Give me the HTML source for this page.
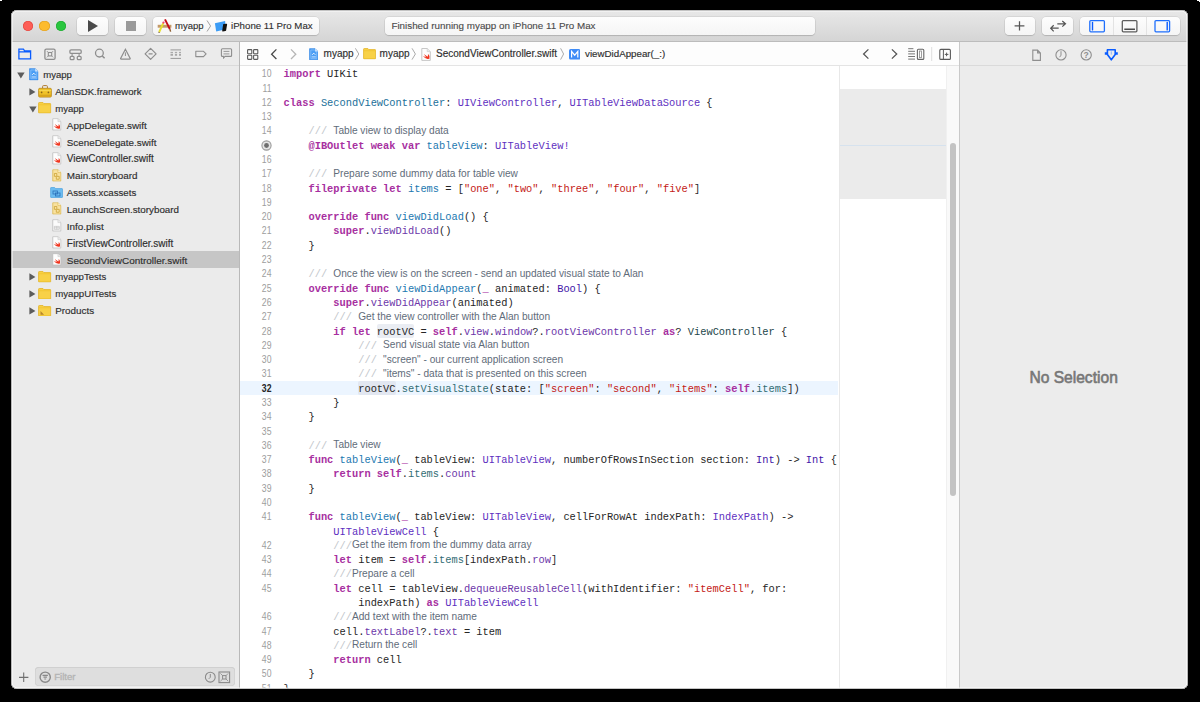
<!DOCTYPE html>
<html><head><meta charset="utf-8">
<style>
*{margin:0;padding:0;box-sizing:border-box}
html,body{width:1200px;height:702px;background:#000;overflow:hidden;font-family:"Liberation Sans",sans-serif}
svg{display:block}
#win{position:absolute;left:11px;top:10px;width:1177px;height:679px;border-radius:6px;background:#ececec;overflow:hidden}
#edge{position:absolute;left:11px;top:10px;width:1177px;height:679px;border-radius:6px;box-shadow:inset 0 0 0 0.6px rgba(110,110,110,0.8),inset 0 0 0 1.6px rgba(255,255,255,0.85);pointer-events:none}
.abs{position:absolute}
#title{position:absolute;left:0;top:0;width:1177px;height:32px;background:linear-gradient(#e8e8e8,#d5d5d5);border-bottom:1px solid #bcbcbc}
.tl{position:absolute;top:10.9px;width:10.4px;height:10.4px;border-radius:50%}
.btn{position:absolute;top:7px;height:18px;background:linear-gradient(#fdfdfd,#f5f5f5);border-radius:4px;box-shadow:0 0 0 0.5px rgba(0,0,0,0.12),0 1px 1px rgba(0,0,0,0.12)}
.txt{position:absolute;white-space:nowrap;color:#2e2e2e;-webkit-text-stroke:0.12px currentColor}
#nav{position:absolute;left:1px;top:32px;width:227px;height:647px;background:#ebebeb}
#navbar{position:absolute;left:0;top:0;width:227px;height:24px;border-bottom:1px solid #dadada}
#divL{position:absolute;left:228px;top:32px;width:1px;height:647px;background:#b9b9b9}
#editor{position:absolute;left:229px;top:32px;width:719px;height:647px;background:#fff;overflow:hidden}
#jump{position:absolute;left:0;top:0;width:719px;height:24px;background:#fdfdfd;border-bottom:1px solid #e4e4e4}
#divR{position:absolute;left:948px;top:32px;width:1px;height:647px;background:#c9c9c9}
#insp{position:absolute;left:949px;top:32px;width:228px;height:647px;background:#ececec}
#inspbar{position:absolute;left:0;top:0;width:228px;height:24px;border-bottom:1px solid #dadada}
.row{position:absolute;left:0;width:227px;height:16.86px;font-size:10px;color:#262626;white-space:nowrap}
.row .t{position:absolute;top:3.4px;line-height:12px;-webkit-text-stroke:0.15px #2e2e2e;color:#2e2e2e}
.row .tri{position:absolute}
.row .ic{position:absolute}
.sel{background:#c6c6c6}
#code{position:absolute;left:0;top:25.3px;width:719px;font-family:"Liberation Mono",monospace;font-size:10.36px;line-height:14.29px;color:#262626;white-space:pre}
.ln{position:absolute;left:0;width:31.5px;height:14.29px;text-align:right;font-family:"Liberation Sans",sans-serif;font-size:10.3px;transform:translateY(-0.2px) scaleX(0.84);transform-origin:100% 50%;color:#9d9d9d}
.cl{position:absolute;left:43.6px;height:14.29px}
.hl{position:absolute;left:0;width:598px;height:14.29px;background:#ecf5ff}
.ln.cur{color:#262626;font-weight:bold}
.rv{background:#eaedf3;border-radius:2px;padding-top:1.8px}
.rv2{background:#e2e7f1;border-radius:2px;padding-top:1.8px}
.k{color:#a72fa0;font-weight:bold}
.s{color:#c41a16}
.ty{color:#5e2fc0}
.ty2{color:#4314a8}
.dt{color:#22709a}
.dc{color:#1b78b0}
.pf{color:#326d74}
.of{color:#6c36a9}
.pc{color:#1c464a}
.cm{color:#c2c6cb}
.ct{font-family:"Liberation Sans",sans-serif;font-size:10.15px;color:#5f6c7a;position:relative;top:-0.6px}
.jt{position:absolute;top:6.2px;font-size:10px;line-height:12px;color:#2e2e2e;white-space:nowrap;-webkit-text-stroke:0.15px #2e2e2e}
</style></head><body>
<svg width="0" height="0" style="position:absolute">
<defs>
<symbol id="swift" viewBox="0 0 10 13"><path d="M0.8 0.5H6.2L9.3 3.6V12.4H0.8Z" fill="#fdfdfd" stroke="#b9b9b9" stroke-width="0.8"/><path d="M6.2 0.5V3.6H9.3" fill="#eaeaea" stroke="#c8c8c8" stroke-width="0.6"/><path d="M1.8 7.8L5.2 9.6L2.9 6L6.6 8.7Q7.3 7.2 6.9 5.8Q8.9 7.6 8.4 10.2Q8.7 11 8 10.8Q4.8 11.9 1.8 7.8Z" fill="#f0351f"/></symbol>
<symbol id="folder" viewBox="0 0 14 12"><path d="M0.6 1.2Q0.6 0.5 1.3 0.5H5.2L6.2 1.6H12.8Q13.4 1.6 13.4 2.3V11Q13.4 11.5 12.8 11.5H1.2Q0.6 11.5 0.6 11Z" fill="#f8d147" stroke="#e2b222" stroke-width="0.8"/><path d="M0.8 2.8H13.2" stroke="#f0c22e" stroke-width="0.8"/></symbol>
<symbol id="proj" viewBox="0 0 10 13"><path d="M0.6 0.6H6.4L9.4 3.6V12.4H0.6Z" fill="#4b9ef5" stroke="#2f83e4" stroke-width="0.7"/><path d="M6.4 0.6V3.6H9.4Z" fill="#dcecfd"/><path d="M1.9 2H6L8.1 4.1V11H1.9Z" fill="none" stroke="#9fcdfb" stroke-width="0.6"/><path d="M3.4 7L5 5.4L6.6 7" fill="none" stroke="#fff" stroke-width="1"/><path d="M2.8 9.3H7.2" stroke="#e2f0ff" stroke-width="0.9"/></symbol>
<symbol id="sb" viewBox="0 0 10 13"><path d="M0.8 0.5H6.2L9.3 3.6V12.4H0.8Z" fill="#f9e2a0" stroke="#d9b44a" stroke-width="0.8"/><path d="M6.2 0.5V3.6H9.3" fill="#fff3cc" stroke="#d9b44a" stroke-width="0.6"/><path d="M2.5 4.5H5V7.5H7.5V10.5H4.5V7.5H2.5Z" fill="none" stroke="#c9a030" stroke-width="0.8"/></symbol>
<symbol id="plist" viewBox="0 0 10 13"><path d="M0.8 0.5H6.2L9.3 3.6V12.4H0.8Z" fill="#fbfbfb" stroke="#b9b9b9" stroke-width="0.8"/><path d="M6.2 0.5V3.6H9.3" fill="#eee" stroke="#c8c8c8" stroke-width="0.6"/><path d="M2.4 7.5H7.6V10.6H2.4ZM2.4 9H7.6M5 7.5V10.6" fill="none" stroke="#b5b5b5" stroke-width="0.6"/></symbol>
</defs>
</svg>
<div id="win">
  <div id="title">
    <div class="tl" style="left:11.6px;background:#fd5e56;box-shadow:inset 0 0 0 0.6px #e0443e"></div>
    <div class="tl" style="left:28.3px;background:#fdbb2e;box-shadow:inset 0 0 0 0.6px #de9f22"></div>
    <div class="tl" style="left:45px;background:#2ac63f;box-shadow:inset 0 0 0 0.6px #1ea832"></div>
    <div class="btn" style="left:66px;width:31px"><svg class="abs" style="left:11px;top:3px" width="10" height="12"><path d="M0 0L10 6L0 12Z" fill="#4a4a4a"/></svg></div>
    <div class="btn" style="left:104px;width:31px"><div class="abs" style="left:11px;top:4px;width:10px;height:10px;background:#9a9a9a"></div></div>
    <div class="btn" style="left:142px;width:166px">
      <svg class="abs" style="left:1px;top:-1px" width="22" height="20"><rect x="3.7" y="8.8" width="13.7" height="2.9" fill="#c49a68"/><path d="M11 3.4L15.8 13" stroke="#c40f1a" stroke-width="1.9"/><path d="M15.8 13L16.6 15.6" stroke="#8a5a2a" stroke-width="1.4"/><path d="M9.4 6.8L5.2 16" stroke="#e6df2e" stroke-width="1.9"/><circle cx="9.5" cy="6.6" r="1.1" fill="#f04378"/><path d="M5.2 16L4.8 16.8" stroke="#6a4a2a" stroke-width="1.4"/></svg>
      <div class="txt" style="left:22px;top:2.7px;font-size:9.5px;line-height:12px">myapp</div>
      <svg class="abs" style="left:53px;top:3px" width="6" height="12"><path d="M1 0.5L4.6 6L1 11.5" fill="none" stroke="#9a9a9a" stroke-width="0.9"/></svg>
      <svg class="abs" style="left:56.9px;top:0px" width="22" height="18"><path d="M4.9 6.2L15.1 4.1L15.8 12.3L6.2 14.4Z" fill="#3c9cf5"/><path d="M13.6 7.1L16.6 6.8Q17.2 6.8 17.1 7.4L16.1 13.6Q16 14 15.5 14.1L12.7 14.4Q12.1 14.4 12.2 13.8L13.1 7.6Q13.2 7.2 13.6 7.1Z" fill="#111"/></svg>
      <div class="txt" style="left:78px;top:2.7px;font-size:9.7px;line-height:12px">iPhone 11 Pro Max</div>
    </div>
    <div class="btn" style="left:374px;width:430px"><div class="txt" style="left:6.4px;top:3.2px;font-size:9.83px;line-height:12px;color:#4a4a4a">Finished running myapp on iPhone 11 Pro Max</div></div>
    <div class="btn" style="left:994px;width:30px"><svg class="abs" style="left:9.4px;top:2.6px" width="11" height="12"><path d="M5.5 1.2V10.6M0.6 5.9H10.4" stroke="#555" stroke-width="1.25"/></svg></div>
    <div class="btn" style="left:1031px;width:31px"><svg class="abs" style="left:0;top:0" width="31" height="18"><path d="M15.3 6.8H23.5M20.3 4L23.5 6.8L20.3 9.6M16.7 11.2H8.7M11.7 8.3L8.7 11.2L11.7 14.3" fill="none" stroke="#555" stroke-width="1.2"/></svg></div>
    <div class="btn" style="left:1069px;width:100px">
      <div class="abs" style="left:33px;top:0;width:1px;height:18px;background:#e3e3e3"></div>
      <div class="abs" style="left:66px;top:0;width:1px;height:18px;background:#e3e3e3"></div>
      <svg class="abs" style="left:0;top:0" width="100" height="18"><rect x="9.8" y="3.6" width="14.6" height="11.2" rx="1" fill="none" stroke="#1f6ffc" stroke-width="1.3"/><path d="M12.5 5.4V12.9" stroke="#0a5cff" stroke-width="1.4" stroke-linecap="round"/>
      <rect x="42.3" y="3.6" width="14.6" height="11.2" rx="1" fill="none" stroke="#5e5e5e" stroke-width="1.3"/><path d="M44.3 12.3H55" stroke="#4a4a4a" stroke-width="1.4"/>
      <rect x="75" y="3.6" width="14.6" height="11.2" rx="1" fill="none" stroke="#1f6ffc" stroke-width="1.3"/><path d="M87.2 5.4V12.9" stroke="#0a5cff" stroke-width="1.4" stroke-linecap="round"/></svg>
    </div>
  </div>
  <div id="nav">
    <div id="navbar">
      <svg class="abs" style="left:0;top:0" width="227" height="23">
        <g fill="none" stroke-width="1.3">
        <path d="M6.9 7.2V16.9H18.6V8.9H12.6L11.4 7.2Z M6.9 9.9H18.6" stroke="#0a5cfe"/>
        <rect x="32.9" y="7.1" width="10.2" height="10.2" rx="1.4" stroke="#8e8e8e"/>
        <rect x="36.3" y="10.5" width="3.4" height="3.4" stroke="#8e8e8e" stroke-width="1.1"/>
        <path d="M34.8 9L36.2 10.4M41.2 9L39.8 10.4M34.8 15.4L36.2 14M41.2 15.4L39.8 14" stroke="#8e8e8e" stroke-width="0.8"/>
        <rect x="57.9" y="7.8" width="11.3" height="3.6" rx="1.2" stroke="#8e8e8e"/>
        <path d="M60.1 11.4V14.3M67.1 11.4V14.3" stroke="#8e8e8e" stroke-width="1"/>
        <rect x="58.2" y="14.4" width="3.8" height="3.3" rx="0.9" stroke="#8e8e8e"/>
        <rect x="65.3" y="14.4" width="3.8" height="3.3" rx="0.9" stroke="#8e8e8e"/>
        <circle cx="87.4" cy="11.1" r="3.9" stroke="#8e8e8e"/>
        <path d="M90.3 14L92.6 16.3" stroke="#8e8e8e" stroke-width="1.5"/>
        <path d="M113.4 7.2L108.6 16.4Q108.4 17.2 109.2 17.2H117.6Q118.4 17.2 118.2 16.4Z" stroke="#8e8e8e" stroke-width="1.2"/>
        <path d="M113.4 10.4V14" stroke="#8e8e8e" stroke-width="1"/>
        <path d="M138.6 6.3L144.1 11.8L138.6 17.3L133.1 11.8Z" stroke="#8e8e8e" stroke-width="1.2" stroke-linejoin="round"/>
        <path d="M136.6 11.9H140.6" stroke="#8e8e8e" stroke-width="1.4"/>
        <path d="M158.5 7.9H169M158.5 16.4H169" stroke="#8e8e8e" stroke-width="0.9"/>
        <path d="M158.5 10.4H161M162.9 10.4H165.1M167 10.4H169" stroke="#9a9a9a" stroke-width="0.9"/>
        <path d="M158.5 12.8H161M162.9 12.8H165.1M167 12.8H169" stroke="#a8a8a8" stroke-width="2"/>
        <path d="M183.8 9.3H191.5L194.1 11.9L191.5 14.6H183.8Z" stroke="#8e8e8e" stroke-width="1.1" stroke-linejoin="round"/>
        <path d="M210.4 6.8H218.6Q219.6 6.8 219.6 7.8V13.4Q219.6 14.4 218.6 14.4H213L211.6 16L211.4 14.4H210.4Q209.4 14.4 209.4 13.4V7.8Q209.4 6.8 210.4 6.8Z" stroke="#8e8e8e" stroke-width="1.1"/>
        <path d="M211.5 9.4H217.4M211.5 11.9H217.4" stroke="#8e8e8e" stroke-width="0.9"/>
        </g>
      </svg>
    </div>
    <div class="row" style="top:23.70px"><svg class="tri" style="left:4.8px;top:6.3px" width="8" height="7"><path d="M0.2 0.6H7.6L3.9 6.6Z" fill="#5c5c5c"/></svg><svg class="ic" style="left:17px;top:2.6px" width="9.6" height="12.6" viewBox="0 0 10 13"><use href="#proj"/></svg><span class="t" style="left:31.2px;font-size:9.55px">myapp</span></div>
<div class="row" style="top:40.56px"><svg class="tri" style="left:17.3px;top:5.3px" width="7" height="8"><path d="M0.4 0.3V7.6L6.4 3.95Z" fill="#5c5c5c"/></svg><svg class="ic" style="left:26.4px;top:2.4px" width="14" height="13"><path d="M4.6 3.3V1.5Q4.6 0.6 5.5 0.6H8.5Q9.4 0.6 9.4 1.5V3.3" fill="none" stroke="#b07a30" stroke-width="1"/><rect x="0.6" y="3.3" width="12.8" height="8.8" rx="1.2" fill="#efc228" stroke="#b8861a" stroke-width="0.8"/><rect x="1" y="9.6" width="12" height="2.2" fill="#d9a51c"/><path d="M0.8 5.6H13.2" stroke="#f8dc60" stroke-width="0.8"/><circle cx="3.6" cy="7.4" r="0.85" fill="#8a6418"/><circle cx="10.4" cy="7.4" r="0.85" fill="#8a6418"/></svg><span class="t" style="left:43.2px;font-size:9.6px">AlanSDK.framework</span></div>
<div class="row" style="top:57.42px"><svg class="tri" style="left:16.6px;top:6.3px" width="8" height="7"><path d="M0.2 0.6H7.6L3.9 6.6Z" fill="#5c5c5c"/></svg><svg class="ic" style="left:26.4px;top:2.9px" width="13.4" height="11.6" viewBox="0 0 14 12"><use href="#folder"/></svg><span class="t" style="left:43.2px;font-size:9.55px">myapp</span></div>
<div class="row" style="top:74.28px"><svg class="ic" style="left:40.3px;top:1.9px" width="9.6" height="12.8" viewBox="0 0 10 13"><use href="#swift"/></svg><span class="t" style="left:54.800000000000004px;font-size:9.93px">AppDelegate.swift</span></div>
<div class="row" style="top:91.14px"><svg class="ic" style="left:40.3px;top:1.9px" width="9.6" height="12.8" viewBox="0 0 10 13"><use href="#swift"/></svg><span class="t" style="left:54.800000000000004px;font-size:9.84px">SceneDelegate.swift</span></div>
<div class="row" style="top:108.00px"><svg class="ic" style="left:40.3px;top:1.9px" width="9.6" height="12.8" viewBox="0 0 10 13"><use href="#swift"/></svg><span class="t" style="left:54.800000000000004px;font-size:10px">ViewController.swift</span></div>
<div class="row" style="top:124.86px"><svg class="ic" style="left:40.3px;top:1.9px" width="9.6" height="12.8" viewBox="0 0 10 13"><use href="#sb"/></svg><span class="t" style="left:54.800000000000004px;font-size:9.88px">Main.storyboard</span></div>
<div class="row" style="top:141.72px"><svg class="ic" style="left:38.2px;top:3px" width="13" height="11"><path d="M0.6 1Q0.6 0.5 1.1 0.5H4.6L5.6 1.6H12Q12.5 1.6 12.5 2.1V10Q12.5 10.5 12 10.5H1.1Q0.6 10.5 0.6 10Z" fill="#6cbcf0" stroke="#4aa2e0" stroke-width="0.7"/><rect x="3" y="4" width="4.5" height="3" fill="none" stroke="#2a6fb8" stroke-width="0.8"/><rect x="5.5" y="6" width="4.5" height="3" fill="none" stroke="#2a6fb8" stroke-width="0.8"/></svg><span class="t" style="left:54.800000000000004px;font-size:9.7px">Assets.xcassets</span></div>
<div class="row" style="top:158.58px"><svg class="ic" style="left:40.3px;top:1.9px" width="9.6" height="12.8" viewBox="0 0 10 13"><use href="#sb"/></svg><span class="t" style="left:54.800000000000004px;font-size:9.8px">LaunchScreen.storyboard</span></div>
<div class="row" style="top:175.44px"><svg class="ic" style="left:40.3px;top:1.9px" width="9.6" height="12.8" viewBox="0 0 10 13"><use href="#plist"/></svg><span class="t" style="left:54.800000000000004px;font-size:9.91px">Info.plist</span></div>
<div class="row" style="top:192.30px"><svg class="ic" style="left:40.3px;top:1.9px" width="9.6" height="12.8" viewBox="0 0 10 13"><use href="#swift"/></svg><span class="t" style="left:54.800000000000004px;font-size:10px">FirstViewController.swift</span></div>
<div class="row sel" style="top:209.16px"><svg class="ic" style="left:40.3px;top:1.9px" width="9.6" height="12.8" viewBox="0 0 10 13"><use href="#swift"/></svg><span class="t" style="left:54.800000000000004px;font-size:9.96px">SecondViewController.swift</span></div>
<div class="row" style="top:226.02px"><svg class="tri" style="left:17.3px;top:5.3px" width="7" height="8"><path d="M0.4 0.3V7.6L6.4 3.95Z" fill="#5c5c5c"/></svg><svg class="ic" style="left:26.4px;top:2.9px" width="13.4" height="11.6" viewBox="0 0 14 12"><use href="#folder"/></svg><span class="t" style="left:43.2px;font-size:9.58px">myappTests</span></div>
<div class="row" style="top:242.88px"><svg class="tri" style="left:17.3px;top:5.3px" width="7" height="8"><path d="M0.4 0.3V7.6L6.4 3.95Z" fill="#5c5c5c"/></svg><svg class="ic" style="left:26.4px;top:2.9px" width="13.4" height="11.6" viewBox="0 0 14 12"><use href="#folder"/></svg><span class="t" style="left:43.2px;font-size:9.66px">myappUITests</span></div>
<div class="row" style="top:259.74px"><svg class="tri" style="left:17.3px;top:5.3px" width="7" height="8"><path d="M0.4 0.3V7.6L6.4 3.95Z" fill="#5c5c5c"/></svg><svg class="ic" style="left:26.4px;top:2.9px" width="13.4" height="11.6" viewBox="0 0 14 12"><use href="#folder"/><path d="M2.6 6.2L6.4 10.2H2.6Z" fill="#b8862a"/></svg><span class="t" style="left:43.2px;font-size:9.88px">Products</span></div>
    <svg class="abs" style="left:7.2px;top:630px" width="11" height="11"><path d="M4.7 0.6V10M0 5.4H9.4" stroke="#707070" stroke-width="1.1"/></svg>
    <div class="abs" style="left:23px;top:625.4px;width:200px;height:18.2px;border-radius:4px;background:#dedede;box-shadow:inset 0 0 0 0.6px #cdcdcd,inset 0 1px 0 #d2d2d2"></div>
    <svg class="abs" style="left:27px;top:628.6px" width="13" height="13"><circle cx="6.2" cy="6.2" r="5.1" fill="none" stroke="#888" stroke-width="1.4"/><path d="M3.5 4.4H8.9M4.5 6.2H7.9M5.3 8H7.1" stroke="#888" stroke-width="1.2"/></svg>
    <div class="txt" style="left:42.2px;top:629px;font-size:9.6px;line-height:12px;color:#b4b4b4;-webkit-text-stroke:0.35px #b4b4b4">Filter</div>
    <svg class="abs" style="left:192px;top:628.8px" width="13" height="13"><circle cx="6.3" cy="6.2" r="4.9" fill="none" stroke="#8a8a8a" stroke-width="1.1"/><path d="M6.3 3V6.3L4.8 7.8" fill="none" stroke="#8a8a8a" stroke-width="1"/></svg>
    <svg class="abs" style="left:206px;top:628.8px" width="13" height="13"><rect x="1" y="1" width="10.6" height="10.6" fill="none" stroke="#8a8a8a" stroke-width="1.1"/><rect x="4.6" y="4.6" width="3.4" height="3.4" fill="none" stroke="#8a8a8a" stroke-width="1"/><path d="M2.4 2.4L4.6 4.6M10.2 2.4L8 4.6M2.4 10.2L4.6 8M10.2 10.2L8 8" stroke="#8a8a8a" stroke-width="0.8"/></svg>
  </div>
  <div id="divL"></div>
  <div id="editor">
    <div id="jump">
      <svg class="abs" style="left:0;top:0" width="719" height="23">
        <g fill="none" stroke="#5a5a5a" stroke-width="1.1">
          <rect x="7.6" y="7.6" width="4.2" height="4.2" rx="0.6"/><rect x="13.6" y="7.6" width="4.2" height="4.2" rx="0.6"/><rect x="7.6" y="13.2" width="4.2" height="4.2" rx="0.6"/><rect x="13.6" y="13.2" width="4.2" height="4.2" rx="0.6"/>
          <path d="M36.4 7.4L31.6 12.2L36.4 17" stroke="#4a4a4a" stroke-width="1.3"/>
          <path d="M51 7.4L55.8 12.2L51 17" stroke="#b5b5b5" stroke-width="1.3"/>
          <path d="M115.4 6.3L118.8 12L115.4 17.6M172 6.3L175.4 12L172 17.6M320.6 6.3L323.6 12L320.6 17.6" stroke="#a0a0a0" stroke-width="0.9"/>
          <path d="M628.4 7.4L623.6 12L628.4 16.6M651.9 7.4L656.7 12L651.9 16.6" stroke="#555" stroke-width="1.3"/>
          <path d="M668.2 6.7H673.4M668.2 9.3H675M668.2 11.9H675M668.2 14.5H675M668.2 17.1H675" stroke="#666" stroke-width="0.9"/>
          <rect x="677.4" y="7.2" width="6.4" height="10.2" rx="1" stroke="#666" stroke-width="1.1"/><rect x="679.6" y="9" width="2" height="6.6" stroke="#888" stroke-width="0.8"/>
          <path d="M691.7 5V19" stroke="#dedede" stroke-width="1"/>
          <rect x="699.8" y="7.4" width="10.6" height="10" rx="1" stroke="#5a5a5a" stroke-width="1.1"/><path d="M703.4 7.4V17.4M704.8 12.4H708.4M706.6 10.6V14.2" stroke="#5a5a5a" stroke-width="1"/>
        </g>
      </svg>
      <svg class="abs" style="left:68.6px;top:5.5px" width="9.5" height="12.5" viewBox="0 0 10 13"><use href="#proj"/></svg>
      <div class="jt" style="left:83.6px">myapp</div>
      <svg class="abs" style="left:123px;top:6px" width="13.2" height="11.5" viewBox="0 0 14 12"><use href="#folder"/></svg>
      <div class="jt" style="left:139.6px">myapp</div>
      <svg class="abs" style="left:180.8px;top:5.5px" width="10" height="13" viewBox="0 0 10 13"><use href="#swift"/></svg>
      <div class="jt" style="left:196px">SecondViewController.swift</div>
      <svg class="abs" style="left:329px;top:7.4px" width="11.4" height="10.6"><rect x="0" y="0" width="11.4" height="10.6" rx="1.6" fill="#3f8cf7"/><path d="M2.6 8.4V2.4L5.7 6.2L8.8 2.4V8.4" fill="none" stroke="#fff" stroke-width="1.2"/></svg>
      <div class="jt" style="left:345px;font-size:9.75px">viewDidAppear(_:)</div>
    </div>
    <div class="abs" style="left:599px;top:24px;width:1px;height:623px;background:#e8e8e8"></div>
    <div class="abs" style="left:600px;top:47px;width:106.4px;height:109.5px;background:#ebebeb"></div>
    <div class="abs" style="left:600px;top:102.6px;width:106.4px;height:1px;background:#d6e2ee"></div>
    <div class="abs" style="left:706.4px;top:24px;width:12.6px;height:623px;background:#f9f9f9;box-shadow:inset 1px 0 0 #f0f0f0"></div>
    <div class="abs" style="left:709.8px;top:100.5px;width:6.4px;height:353.5px;border-radius:3.2px;background:#c3c3c3"></div>
    <div id="code"><div class="ln" style="top:0.00px">10</div>
<div class="cl" style="top:0.00px"><span class="k">import</span> UIKit</div>
<div class="ln" style="top:14.29px">11</div>
<div class="cl" style="top:14.29px"></div>
<div class="ln" style="top:28.58px">12</div>
<div class="cl" style="top:28.58px"><span class="k">class</span> <span class="dt">SecondViewController</span>: <span class="ty">UIViewController</span>, <span class="ty">UITableViewDataSource</span> {</div>
<div class="ln" style="top:42.87px">13</div>
<div class="cl" style="top:42.87px"></div>
<div class="ln" style="top:57.16px">14</div>
<div class="cl" style="top:57.16px">    <span class="cm">///</span> <span class="ct">Table view to display data</span></div>
<svg class="abs" style="left:21.1px;top:72.30px" width="11" height="11" viewBox="0 0 11 11"><circle cx="5.5" cy="5.5" r="4.6" fill="#e4e4e4" stroke="#9a9a9a" stroke-width="1.1"/><circle cx="5.5" cy="5.5" r="2.4" fill="#6e6e6e"/></svg>
<div class="cl" style="top:71.45px">    <span class="k">@IBOutlet</span> <span class="k">weak</span> <span class="k">var</span> <span class="dc">tableView</span>: <span class="ty">UITableView!</span></div>
<div class="ln" style="top:85.74px">16</div>
<div class="cl" style="top:85.74px"></div>
<div class="ln" style="top:100.03px">17</div>
<div class="cl" style="top:100.03px">    <span class="cm">///</span> <span class="ct">Prepare some dummy data for table view</span></div>
<div class="ln" style="top:114.32px">18</div>
<div class="cl" style="top:114.32px">    <span class="k">fileprivate</span> <span class="k">let</span> <span class="dc">items</span> = [<span class="s">&quot;one&quot;</span>, <span class="s">&quot;two&quot;</span>, <span class="s">&quot;three&quot;</span>, <span class="s">&quot;four&quot;</span>, <span class="s">&quot;five&quot;</span>]</div>
<div class="ln" style="top:128.61px">19</div>
<div class="cl" style="top:128.61px"></div>
<div class="ln" style="top:142.90px">20</div>
<div class="cl" style="top:142.90px">    <span class="k">override</span> <span class="k">func</span> <span class="dc">viewDidLoad</span>() {</div>
<div class="ln" style="top:157.19px">21</div>
<div class="cl" style="top:157.19px">        <span class="k">super</span>.<span class="of">viewDidLoad</span>()</div>
<div class="ln" style="top:171.48px">22</div>
<div class="cl" style="top:171.48px">    }</div>
<div class="ln" style="top:185.77px">23</div>
<div class="cl" style="top:185.77px"></div>
<div class="ln" style="top:200.06px">24</div>
<div class="cl" style="top:200.06px">    <span class="cm">///</span> <span class="ct">Once the view is on the screen - send an updated visual state to Alan</span></div>
<div class="ln" style="top:214.35px">25</div>
<div class="cl" style="top:214.35px">    <span class="k">override</span> <span class="k">func</span> <span class="dc">viewDidAppear</span>(<span class="k">_</span> animated: <span class="ty2">Bool</span>) {</div>
<div class="ln" style="top:228.64px">26</div>
<div class="cl" style="top:228.64px">        <span class="k">super</span>.<span class="of">viewDidAppear</span>(animated)</div>
<div class="ln" style="top:242.93px">27</div>
<div class="cl" style="top:242.93px">        <span class="cm">///</span> <span class="ct">Get the view controller with the Alan button</span></div>
<div class="ln" style="top:257.22px">28</div>
<div class="cl" style="top:257.22px">        <span class="k">if</span> <span class="k">let</span> <span class="rv">rootVC</span> = <span class="k">self</span>.<span class="of">view</span>.<span class="of">window</span>?.<span class="of">rootViewController</span> <span class="k">as</span>? <span class="pc">ViewController</span> {</div>
<div class="ln" style="top:271.51px">29</div>
<div class="cl" style="top:271.51px">            <span class="cm">///</span> <span class="ct">Send visual state via Alan button</span></div>
<div class="ln" style="top:285.80px">30</div>
<div class="cl" style="top:285.80px">            <span class="cm">///</span> <span class="ct">&quot;screen&quot; - our current application screen</span></div>
<div class="ln" style="top:300.09px">31</div>
<div class="cl" style="top:300.09px">            <span class="cm">///</span> <span class="ct">&quot;items&quot; - data that is presented on this screen</span></div>
<div class="hl" style="top:313.28px"></div>
<div class="ln cur" style="top:314.38px">32</div>
<div class="cl" style="top:314.38px">            <span class="rv2">rootVC</span>.<span class="pf">setVisualState</span>(state: [<span class="s">&quot;screen&quot;</span>: <span class="s">&quot;second&quot;</span>, <span class="s">&quot;items&quot;</span>: <span class="k">self</span>.<span class="pf">items</span>])</div>
<div class="ln" style="top:328.67px">33</div>
<div class="cl" style="top:328.67px">        }</div>
<div class="ln" style="top:342.96px">34</div>
<div class="cl" style="top:342.96px">    }</div>
<div class="ln" style="top:357.25px">35</div>
<div class="cl" style="top:357.25px"></div>
<div class="ln" style="top:371.54px">36</div>
<div class="cl" style="top:371.54px">    <span class="cm">///</span> <span class="ct">Table view</span></div>
<div class="ln" style="top:385.83px">37</div>
<div class="cl" style="top:385.83px">    <span class="k">func</span> <span class="dc">tableView</span>(<span class="k">_</span> tableView: <span class="ty">UITableView</span>, numberOfRowsInSection section: <span class="ty2">Int</span>) -&gt; <span class="ty2">Int</span> {</div>
<div class="ln" style="top:400.12px">38</div>
<div class="cl" style="top:400.12px">        <span class="k">return</span> <span class="k">self</span>.<span class="pf">items</span>.<span class="of">count</span></div>
<div class="ln" style="top:414.41px">39</div>
<div class="cl" style="top:414.41px">    }</div>
<div class="ln" style="top:428.70px">40</div>
<div class="cl" style="top:428.70px"></div>
<div class="ln" style="top:442.99px">41</div>
<div class="cl" style="top:442.99px">    <span class="k">func</span> <span class="dc">tableView</span>(<span class="k">_</span> tableView: <span class="ty">UITableView</span>, cellForRowAt indexPath: <span class="ty">IndexPath</span>) -&gt;</div>
<div class="cl" style="top:457.28px">        <span class="ty">UITableViewCell</span> {</div>
<div class="ln" style="top:471.57px">42</div>
<div class="cl" style="top:471.57px">        <span class="cm">///</span><span class="ct">Get the item from the dummy data array</span></div>
<div class="ln" style="top:485.86px">43</div>
<div class="cl" style="top:485.86px">        <span class="k">let</span> item = <span class="k">self</span>.<span class="pf">items</span>[indexPath.<span class="of">row</span>]</div>
<div class="ln" style="top:500.15px">44</div>
<div class="cl" style="top:500.15px">        <span class="cm">///</span><span class="ct">Prepare a cell</span></div>
<div class="ln" style="top:514.44px">45</div>
<div class="cl" style="top:514.44px">        <span class="k">let</span> cell = tableView.<span class="of">dequeueReusableCell</span>(withIdentifier: <span class="s">&quot;itemCell&quot;</span>, for:</div>
<div class="cl" style="top:528.73px">            indexPath) <span class="k">as</span> <span class="ty">UITableViewCell</span></div>
<div class="ln" style="top:543.02px">46</div>
<div class="cl" style="top:543.02px">        <span class="cm">///</span><span class="ct">Add text with the item name</span></div>
<div class="ln" style="top:557.31px">47</div>
<div class="cl" style="top:557.31px">        cell.<span class="of">textLabel</span>?.<span class="of">text</span> = item</div>
<div class="ln" style="top:571.60px">48</div>
<div class="cl" style="top:571.60px">        <span class="cm">///</span><span class="ct">Return the cell</span></div>
<div class="ln" style="top:585.89px">49</div>
<div class="cl" style="top:585.89px">        <span class="k">return</span> cell</div>
<div class="ln" style="top:600.18px">50</div>
<div class="cl" style="top:600.18px">    }</div>
<div class="ln" style="top:614.47px">51</div>
<div class="cl" style="top:614.47px">}</div></div>
  </div>
  <div id="divR"></div>
  <div id="insp">
    <div id="inspbar">
      <svg class="abs" style="left:0;top:0" width="228" height="23">
        <g fill="none" stroke="#8e8e8e" stroke-width="1.1">
          <path d="M72.8 8.1H77.6L80.4 10.9V18.4H72.8Z M77.6 8.1V10.9H80.4"/>
          <circle cx="101" cy="12.9" r="5.1"/><path d="M101 9.2V13.2L99.6 15.2" stroke-width="1"/>
          <circle cx="126.2" cy="12.9" r="5.1"/>
        </g>
        <text x="126.2" y="16.2" font-family="Liberation Sans" font-size="8.6" font-weight="bold" fill="#8e8e8e" text-anchor="middle">?</text>
        <path d="M147.4 7.8H155.2V12.6L151.3 17.8L147.4 12.6Z" fill="none" stroke="#0a5cff" stroke-width="1.6" stroke-linejoin="round"/>
        <path d="M144.8 11.5H147.4M155.2 11.5H157.8" stroke="#0a5cff" stroke-width="2.4"/><path d="M151.3 9.4V12.6" stroke="#8db6ff" stroke-width="1"/>
      </svg>
    </div>
    <div class="txt" style="left:69.4px;top:327.4px;font-size:15.6px;line-height:17px;color:#777;-webkit-text-stroke:0.6px #777">No Selection</div>
  </div>
</div>
<div id="edge"></div>
<div class="abs" style="left:0;top:0;width:2px;height:1px;background:#fff"></div>
<div class="abs" style="left:1197px;top:0;width:3px;height:1px;background:#fff"></div>
<div class="abs" style="left:1199px;top:1px;width:1px;height:1px;background:#fff"></div>
</body></html>
